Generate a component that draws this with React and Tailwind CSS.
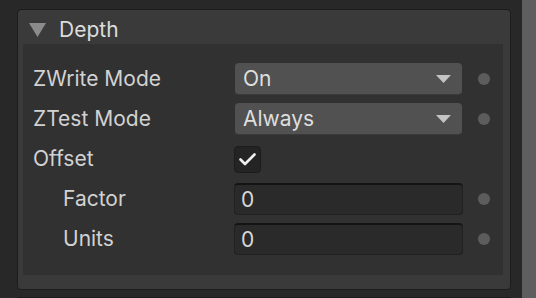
import React from 'react';

const Dot = ({ show = true }) => (
  <div className="w-[12px] h-[12px] rounded-full ml-[15px] shrink-0">
    {show && <div className="w-full h-full rounded-full bg-[#5c5c5c]" />}
  </div>
);

const Dropdown = ({ value }) => (
  <div className="w-[227px] h-[32px] ml-[1px] rounded-[4px] bg-[#515151] border-b border-[#3a3a3a] flex items-center pl-[8px] pr-[11px]">
    <span className="flex-1 text-[#dedede]">{value}</span>
    <svg width="15" height="8" viewBox="0 0 15 8">
      <path d="M0 0 H15 L7.5 8 Z" fill="#c4c4c4" />
    </svg>
  </div>
);

const Field = ({ value }) => (
  <div className="w-[230px] h-[32px] rounded-[4px] bg-[#2a2a2a] border border-[#212121] border-t-[#141414] border-t-2 flex items-center pl-[6px] text-[#d8d8d8]">
    {value}
  </div>
);

const Row = ({ label, indent, children, dot = true }) => (
  <div className="flex items-center h-[32px]">
    <div className={indent ? 'w-[201px] pl-[30px]' : 'w-[201px]'}>{label}</div>
    <div className="w-[229px] flex items-center">{children}</div>
    <Dot show={dot} />
  </div>
);

export default function App() {
  return (
    <div
      className="w-[536px] h-[298px] bg-[#282828] flex overflow-hidden text-[21px] text-[#d2d2d2]"
      style={{ fontFamily: 'Inter, "Noto Sans", sans-serif' }}
    >
      <div className="flex-1 pl-[17px] pr-[11px] pt-[9px] flex flex-col">
        <div className="border border-[#1c1c1c] rounded-[4px] bg-[#3a3a3a] pb-[14px]">
          <div className="h-[34px] flex items-center pl-[11px] pt-[5px]">
            <svg width="17" height="14" viewBox="0 0 17 14">
              <path d="M0 0 H17 L8.5 14 Z" fill="#8b8b8b" />
            </svg>
            <span className="ml-[13px] text-[#dcdcdc]">Depth</span>
          </div>
          <div className="ml-[5px] mr-[7px] bg-[#313131] pt-[19px] pb-[20px] pl-[10px] flex flex-col gap-[8px]">
            <Row label="ZWrite Mode">
              <Dropdown value="On" />
            </Row>
            <Row label="ZTest Mode">
              <Dropdown value="Always" />
            </Row>
            <Row label="Offset" dot={false}>
              <div className="w-[27px] h-[27px] rounded-[4px] bg-[#242424] border border-[#1c1c1c] flex items-center justify-center">
                <svg width="17" height="13" viewBox="0 0 17 13">
                  <path d="M1.5 6.5 L6 11 L15.5 1.5" fill="none" stroke="#eeeeee" strokeWidth="2.6" strokeLinecap="round" strokeLinejoin="round" />
                </svg>
              </div>
            </Row>
            <Row label="Factor" indent>
              <Field value="0" />
            </Row>
            <Row label="Units" indent>
              <Field value="0" />
            </Row>
          </div>
        </div>
        <div className="mt-[7px] border border-[#1c1c1c] rounded-[4px] bg-[#3a3a3a] h-[20px]" />
      </div>
      <div className="w-[14px] bg-[#5e5e5e]" />
    </div>
  );
}
